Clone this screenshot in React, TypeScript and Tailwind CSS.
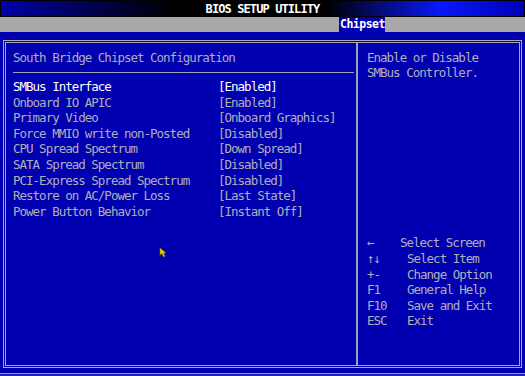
const items: { label: string; value: string; active?: boolean }[] = [
  { label: "SMBus Interface", value: "[Enabled]", active: true },
  { label: "Onboard IO APIC", value: "[Enabled]" },
  { label: "Primary Video", value: "[Onboard Graphics]" },
  { label: "Force MMIO write non-Posted", value: "[Disabled]" },
  { label: "CPU Spread Spectrum", value: "[Down Spread]" },
  { label: "SATA Spread Spectrum", value: "[Disabled]" },
  { label: "PCI-Express Spread Spectrum", value: "[Disabled]" },
  { label: "Restore on AC/Power Loss", value: "[Last State]" },
  { label: "Power Button Behavior", value: "[Instant Off]" },
];

const keys: { key: string; desc: string; keyWidth: string }[] = [
  { key: "←", desc: "Select Screen", keyWidth: "w-[33px]" },
  { key: "↑↓", desc: "Select Item", keyWidth: "w-[40px]" },
  { key: "+-", desc: "Change Option", keyWidth: "w-[40px]" },
  { key: "F1", desc: "General Help", keyWidth: "w-[40px]" },
  { key: "F10", desc: "Save and Exit", keyWidth: "w-[40px]" },
  { key: "ESC", desc: "Exit", keyWidth: "w-[40px]" },
];

const App = () => {
  return (
    <div className="relative w-[525px] h-[376px] overflow-hidden bg-[#0000b0] flex flex-col font-['DejaVu_Sans_Mono','Liberation_Mono',monospace] text-[12.5px] leading-[15.6px] tracking-[-1px] text-[#b0b0b8]">
      {/* title bar */}
      <div className="h-[17px] border border-black bg-[linear-gradient(90deg,#0000a8_0%,#000000_33%,#000000_62%,#0818f8_84%,#0000b8_100%)] flex items-center justify-center">
        <span className="text-white font-bold text-[12px] tracking-[-0.9px] leading-none">
          BIOS SETUP UTILITY
        </span>
      </div>

      {/* tab bar */}
      <div className="h-[15px] bg-[#a8a8a8] flex">
        <div className="w-[339px]" />
        <div className="w-[46px] bg-[#0000b0] text-white font-bold text-[11.5px] tracking-[-0.5px] leading-[15px] pl-[1px]">
          Chipset
        </div>
        <div className="flex-1" />
      </div>

      {/* main frame */}
      <div className="pt-[8px] pl-[3px] pr-[3px]">
        <div className="h-[328px] border-[3px] border-double border-[#a8a8b8] flex">
          {/* left panel */}
          <div className="w-[350px] flex flex-col">
            <div className="pt-[6.5px] pl-[7px]">South Bridge Chipset Configuration</div>
            <div className="mt-[6.5px] ml-[7px] mr-[2px] h-px bg-[#a0a0c0]" />
            <div className="mt-[6.5px] pl-[7px] flex flex-col">
              {items.map((it) => (
                <div
                  key={it.label}
                  className={`flex ${it.active ? "text-white" : ""}`}
                >
                  <span className="w-[205px]">{it.label}</span>
                  <span>{it.value}</span>
                </div>
              ))}
            </div>
          </div>

          <div className="w-[2px] bg-[#a0a0c0]" />

          {/* right panel */}
          <div className="flex-1 flex flex-col pl-[9px]">
            <div className="pt-[6.5px]">
              <div>Enable or Disable</div>
              <div>SMBus Controller.</div>
            </div>
            <div className="mt-auto pb-[36px] flex flex-col">
              {keys.map((k) => (
                <div key={k.key} className="flex">
                  <span className={k.keyWidth}>{k.key}</span>
                  <span>{k.desc}</span>
                </div>
              ))}
            </div>
          </div>
        </div>
      </div>

      {/* bottom edge */}
      <div className="mt-auto h-[3px] border-t border-[#9090c8] bg-[#2020b8]" />

      {/* mouse pointer */}
      <svg
        className="absolute left-[159px] top-[247px]"
        width="8"
        height="11"
        viewBox="0 0 8 11"
      >
        <path d="M1 1 L1 8 L3 6.5 L4.5 10 L6 9.3 L4.6 6 L7 6 Z" fill="#e8d800" stroke="#807000" strokeWidth="0.6" />
      </svg>
    </div>
  );
};

export default App;
